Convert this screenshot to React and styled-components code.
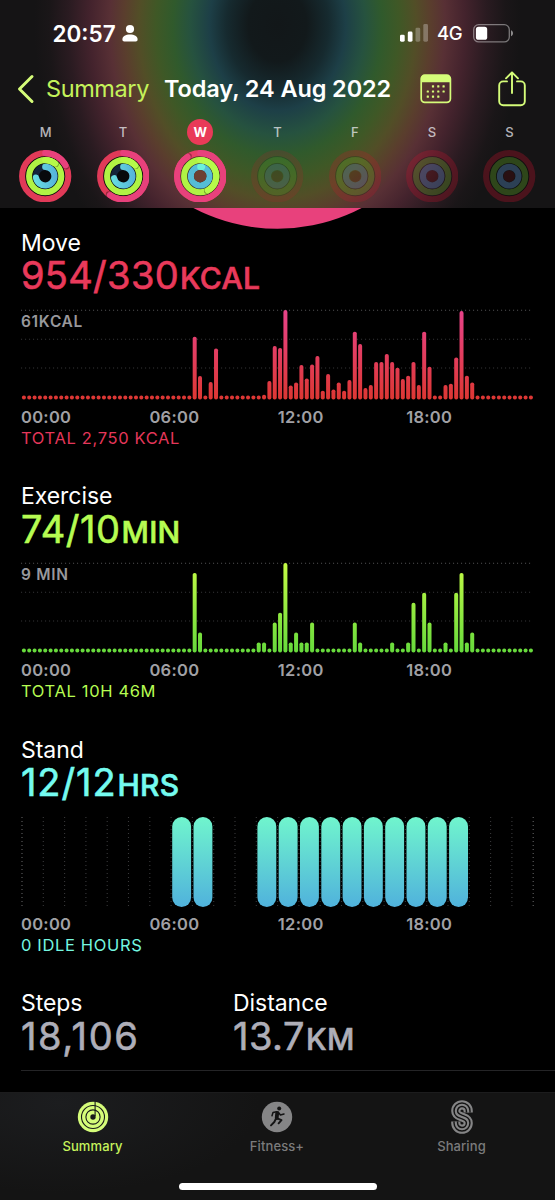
import React from 'react'
import styled, { createGlobalStyle } from 'styled-components';

const BARS = 96
const STEP = 5.337

// quarter-hour bars as index: height, everything else is an empty dot
const MOVE = {
  32: 62.7, 33: 23.3, 35: 17.3, 36: 51, 45: 4.7, 46: 18.3, 47: 53.3, 48: 51.5,
  49: 89.3, 50: 14, 51: 17, 52: 34.3, 53: 21, 54: 35, 55: 43.3, 56: 8.7,
  57: 25.3, 58: 10, 59: 17, 60: 8.7, 61: 19.3, 62: 67.7, 63: 55.3, 64: 11.3,
  65: 14.3, 66: 37.3, 67: 37.5, 68: 45.5, 69: 37.3, 70: 31.7, 71: 20.3,
  72: 23.7, 73: 37.5, 74: 14.3, 75: 67.7, 76: 32.7, 79: 14.3, 80: 15.7,
  81: 42, 82: 88.3, 83: 23.7, 84: 17,
}

// minutes of exercise
const EXERCISE = {
  32: 8, 33: 2, 44: 1, 45: 1, 47: 3, 48: 4, 49: 9, 50: 1, 51: 2, 52: 1, 53: 1,
  54: 3, 62: 3, 63: 1, 69: 1, 72: 1, 73: 5, 75: 6, 76: 3, 79: 1, 81: 6, 82: 8,
  83: 1, 84: 2,
}

const STAND = [7, 8, 11, 12, 13, 14, 15, 16, 17, 18, 19, 20]

const DAYS = [
  { letter: 'M', move: 62, exercise: 38, stand: 262 },
  { letter: 'T', move: 215, exercise: 48, stand: 258 },
  { letter: 'W', move: 327, exercise: 152, stand: 360, today: true },
  { letter: 'T', fade: 0.55 },
  { letter: 'F', fade: 0.75 },
  { letter: 'S', fade: 0.9 },
  { letter: 'S', fade: 1 },
]

const point = (r, deg) => {
  const a = (deg - 90) * Math.PI / 180
  return [26.2 + r * Math.cos(a), 26.2 + r * Math.sin(a)]
}

const arc = (r, deg) => {
  const [x, y] = point(r, deg)
  return `M26.2 ${26.2 - r}A${r} ${r} 0 ${deg > 180 ? 1 : 0} 1 ${x} ${y}`
}

// a closed ring with the end of its second lap on top
const Lap = ({ r, deg, base, top }) => {
  const [x, y] = point(r, deg + 4)
  return (
    <>
      <circle cx="26.2" cy="26.2" r={r} stroke={base} />
      <circle cx={x} cy={y} r="2.8" fill="rgba(0,0,0,.32)" stroke="none" />
      <path d={arc(r, deg)} stroke={top} strokeLinecap="round" />
    </>
  )
}

const Rings = ({ day }) => {
  if (!day.move) {
    return (
      <RingSvg viewBox="0 0 52.4 52.4" opacity={day.fade}>
        <circle cx="26.2" cy="26.2" r="23.1" stroke="rgba(215,17,45,.28)" />
        <circle cx="26.2" cy="26.2" r="19.6" stroke="rgba(0,0,0,.22)" strokeWidth="1" />
        <circle cx="26.2" cy="26.2" r="16.1" stroke="rgba(110,200,40,.28)" />
        <circle cx="26.2" cy="26.2" r="12.8" stroke="rgba(0,0,0,.3)" strokeWidth="1" />
        <circle cx="26.2" cy="26.2" r="9.3" stroke="rgba(90,150,210,.34)" />
        <circle cx="26.2" cy="26.2" r="5.6" fill="rgba(90,10,10,.3)" stroke="none" />
      </RingSvg>
    )
  }
  const blue = `blue-${day.letter}`
  return (
    <RingSvg viewBox="0 0 52.4 52.4">
      <defs>
        <linearGradient id={blue} gradientUnits="userSpaceOnUse" x1="14" y1="0" x2="38" y2="0">
          <stop offset="0" stopColor="#68e0e2" />
          <stop offset="1" stopColor="#55b2da" />
        </linearGradient>
      </defs>
      <circle cx="26.2" cy="26.2" r="21" fill={day.today ? '#453329' : '#08090c'} stroke="none" />
      <Lap r={23.1} deg={day.move} base={day.today ? '#e83e68' : '#e13a58'} top="#e8417c" />
      <Lap r={16.1} deg={day.exercise} base="#b0f344" top="#b6fa4a" />
      <circle cx="26.2" cy="26.2" r="9.3" stroke="#14243a" />
      {day.stand === 360
        ? <>
            <circle cx="26.2" cy="26.2" r="9.3" stroke="#55bdd6" />
            <path d={arc(9.3, 12)} stroke="#6cf0d8" strokeLinecap="round" />
            <circle cx="26.2" cy="26.2" r="6.2" fill="#6d4032" stroke="none" />
          </>
        : <path d={arc(9.3, day.stand)} stroke={`url(#${blue})`} strokeLinecap="round" />
      }
    </RingSvg>
  )
}

const BarChart = ({ id, data, scale, from, to }) => (
  <ChartSvg viewBox="0 0 534 94">
    <defs>
      <linearGradient id={id} gradientUnits="userSpaceOnUse" x1="0" y1="2" x2="0" y2="91.3">
        <stop offset="0" stopColor={from} />
        <stop offset="1" stopColor={to} />
      </linearGradient>
    </defs>
    {[2.2, 31.2, 60].map((y, i) => (
      <line key={y} x1="0" x2="512" y1={y} y2={y} stroke={i === 0 ? '#505052' : '#353537'} strokeWidth="1.1" strokeDasharray="1.1 2.9" />
    ))}
    {Array.from({ length: BARS }, (_, i) => {
      const h = Math.max((data[i] || 0) * scale, 4)
      return <rect key={i} x={0.9 + i * STEP} y={91.4 - h} width="4" height={h} rx="1.9" fill={`url(#${id})`} />
    })}
  </ChartSvg>
)

const StandChart = () => (
  <ChartSvg viewBox="0 0 534 94">
    <defs>
      <linearGradient id="stand" gradientUnits="userSpaceOnUse" x1="0" y1="2" x2="0" y2="92">
        <stop offset="0" stopColor="#70f5cd" />
        <stop offset="1" stopColor="#50b2dc" />
      </linearGradient>
    </defs>
    {Array.from({ length: 25 }, (_, i) => (
      <line key={i} x1={1 + i * 21.3} x2={1 + i * 21.3} y1="2" y2="91" stroke={i % 24 === 0 ? '#606062' : '#38383a'} strokeWidth="1.1" strokeDasharray="1.1 2.9" />
    ))}
    {STAND.map((hour) => (
      <rect key={hour} x={2.1 + hour * 21.3} y="2" width="18.9" height="90" rx="9.45" fill="url(#stand)" />
    ))}
  </ChartSvg>
)

const Hours = () => (
  <Axis>
    <span>00:00</span>
    <span>06:00</span>
    <span>12:00</span>
    <span>18:00</span>
  </Axis>
)

const Header = () => (
  <Top>
    <StatusBar>
      <Clock>20:57</Clock>
      <PersonIcon viewBox="0 0 16 18">
        <circle cx="8" cy="5" r="4.1" />
        <path d="M.4 15.6C.4 12.4 3.6 10.6 8 10.6s7.6 1.8 7.6 5c0 1.2-.7 1.9-1.9 1.9H2.3C1.1 17.5.4 16.8.4 15.6z" />
      </PersonIcon>
      <Signal viewBox="0 0 29 18">
        <rect x="0" y="10.7" width="4.7" height="7" rx="1.4" />
        <rect x="7.8" y="7.6" width="4.7" height="10.1" rx="1.4" />
        <rect x="15.5" y="3.7" width="4.7" height="14" rx="1.4" opacity=".28" />
        <rect x="23.3" y="0" width="4.7" height="17.7" rx="1.4" opacity=".28" />
      </Signal>
      <Network>4G</Network>
      <Battery viewBox="0 0 41 19">
        <rect x=".7" y=".7" width="35.6" height="17.2" rx="5" fill="none" stroke="#fff" strokeOpacity=".42" strokeWidth="1.3" />
        <rect x="2.9" y="2.8" width="11.3" height="13" rx="2.6" fill="#fff" />
        <path d="M38 6.3c2.7 1 2.7 5 0 6z" fill="#fff" fillOpacity=".5" />
      </Battery>
    </StatusBar>

    <NavRow>
      <BackIcon viewBox="0 0 18 30">
        <path d="M15 2.5 2.5 15 15 27.5" />
      </BackIcon>
      <BackLabel>Summary</BackLabel>
      <Title>Today, 24 Aug 2022</Title>
      <CalendarIcon viewBox="0 0 32 30">
        <rect x="1.2" y="1.2" width="29.2" height="27.2" rx="3.6" fill="none" stroke="#d5fc79" strokeWidth="1.7" />
        <path d="M1 8.3V4.5Q1 1 4.5 1h22.6q3.5 0 3.5 3.5v3.8z" fill="#d5fc79" />
        {[[13, 12.3], [18.3, 12.3], [23.6, 12.3], [7.8, 17.5], [13, 17.5], [18.3, 17.5], [23.6, 17.5], [7.8, 22.7], [13, 22.7], [18.3, 22.7]].map(([x, y]) => (
          <rect key={`${x}-${y}`} x={x - 1.1} y={y - 1.1} width="2.2" height="2.2" rx=".5" fill="#d5fc79" />
        ))}
      </CalendarIcon>
      <ShareIcon viewBox="0 0 28 36">
        <path d="M9 10.4H5.2a4 4 0 0 0-4 4v15.9a4 4 0 0 0 4 4h17.600a4 4 0 0 0 4-4V14.4a4 4 0 0 0-4-4H19" />
        <path d="M14 22V1.5M8 7.3l6-6 6 6" />
      </ShareIcon>
    </NavRow>

    <Week>
      {DAYS.map((day, i) => (
        <Day key={i}>
          <Letter $today={day.today}>{day.letter}</Letter>
          <Rings day={day} />
        </Day>
      ))}
    </Week>
  </Top>
)

const TabBar = () => (
  <Tabs>
    <TabRow>
      <Tab $active>
        <TabIcon viewBox="-17 -17 34 34">
          <circle r="15.2" fill="#d5fc79" />
          <g fill="none" stroke="#18191a" strokeWidth="1.1">
            <circle r="11.5" />
            <circle r="7.1" />
            <path d="M2.1-15.5V-1" />
          </g>
          <circle r="2.7" fill="#18191a" />
        </TabIcon>
        Summary
      </Tab>
      <Tab>
        <TabIcon viewBox="-17 -17 34 34">
          <circle r="15.2" fill="#858586" />
          <circle cx="2.2" cy="-8.4" r="2" fill="#141414" />
          <g fill="none" stroke="#141414" strokeLinecap="round" strokeLinejoin="round">
            <path d="M.2-4-.3 1" strokeWidth="3.8" />
            <path d="M-.5-5.2-4-4.4-5-1.3M1.5-4.6 3.4-2 7-3" strokeWidth="1.5" />
            <path d="M.3 1.3 4.5 3.2 1.6 6.3M-1 1.5-2.7 5-6 8.4" strokeWidth="1.9" />
          </g>
        </TabIcon>
        Fitness+
      </Tab>
      <Tab>
        <TabIcon viewBox="-17 -17 34 34">
          <g fill="none">
            {[['#858586', 9.2], ['#141414', 5], ['#858586', 2.1]].map(([color, width]) => (
              <path key={width} d="M6.2-4.4V-6A6.2 6.2 0 0 0-6.2-6C-6.2-2-3.2-1.2 0 0S6.2 2 6.2 6A6.2 6.2 0 0 1-6.2 6V4.4" stroke={color} strokeWidth={width} />
            ))}
          </g>
        </TabIcon>
        Sharing
      </Tab>
    </TabRow>
    <HomeIndicator />
  </Tabs>
)

const App = () => {
  return (
    <Screen>
      <GlobalStyle />
      <Header />
      <Main>
        <RingEdge viewBox="0 0 555 21">
          <circle cx="277.5" cy="-159.7" r="180.5" fill="#e8417c" />
        </RingEdge>

        <Section>
          <Name>Move</Name>
          <Value $color="#e93a5b" $track="0.3px">954/330<Unit>KCAL</Unit></Value>
          <ChartBox>
            <BarChart id="move" data={MOVE} scale={1} from="#e8438a" to="#dd3733" />
            <Peak>61KCAL</Peak>
          </ChartBox>
          <Hours />
          <Total $color="#e5375a">TOTAL 2,750 KCAL</Total>
        </Section>

        <Section>
          <Name>Exercise</Name>
          <Value $color="#b6fc52" $track="0.5px">74/10<Unit>MIN</Unit></Value>
          <ChartBox>
            <BarChart id="exercise" data={EXERCISE} scale={9.93} from="#c4fb45" to="#66da3c" />
            <Peak>9 MIN</Peak>
          </ChartBox>
          <Hours />
          <Total $color="#b6fc52">TOTAL 10H 46M</Total>
        </Section>

        <Section>
          <Name>Stand</Name>
          <Value $color="#74fbf0" $track="0.9px">12/12<Unit>HRS</Unit></Value>
          <ChartBox>
            <StandChart />
          </ChartBox>
          <Hours />
          <Total $color="#74f7e0">0 IDLE HOURS</Total>
        </Section>

        <Stats>
          <Stat>
            <Name>Steps</Name>
            <Value $color="#aeaeb8" $track="1.6px">18,106</Value>
          </Stat>
          <Stat>
            <Name>Distance</Name>
            <Value $color="#aeaeb8" $track="0.5px">13.7<Unit>KM</Unit></Value>
          </Stat>
        </Stats>
      </Main>
      <TabBar />
    </Screen>
  )
}

const GlobalStyle = createGlobalStyle`
* {
  box-sizing: border-box;
}
body {
  margin: 0;
  background-color: #000;
  font-family: Inter, "Liberation Sans", sans-serif;
}
svg {
  display: block;
  flex-shrink: 0;
}
`

const Screen = styled.div`
display: flex;
flex-direction: column;
width: 555px;
height: 1200px;
overflow: hidden;
background-color: #000;
color: #fff;
`

const Top = styled.header`
height: 208px;
flex-shrink: 0;
background: radial-gradient(ellipse 243px 305px at 277.5px 25px,
  #121719 0%, #12191b 12%, #162a2f 21%, #1d3f47 28%, #26523f 36%,
  #305a2c 43%, #3f5826 50%, #524e27 57%, #5a3e2d 63%, #583035 69%,
  #44232d 77%, #2a1b21 86%, #1a1618 94%, #151415 100%);
`

const StatusBar = styled.div`
display: flex;
align-items: center;
height: 66px;
padding-left: 52.5px;
`

const Clock = styled.span`
width: 69.5px;
font-size: 22.5px;
font-weight: 600;
letter-spacing: 0;
`

const PersonIcon = styled.svg`
width: 16px;
height: 18px;
margin-right: 262px;
fill: #fff;
`

const Signal = styled.svg`
width: 29px;
height: 18px;
fill: #fff;
`

const Network = styled.span`
width: 36px;
margin-left: 8px;
font-size: 18.5px;
font-weight: 500;
letter-spacing: -0.3px;
`

const Battery = styled.svg`
width: 41px;
height: 19px;
`

const NavRow = styled.nav`
display: flex;
align-items: center;
height: 45px;
padding-left: 17px;
`

const BackIcon = styled.svg`
width: 18px;
height: 30px;
fill: none;
stroke: #d5fc79;
stroke-width: 3;
stroke-linecap: round;
stroke-linejoin: round;
`

const BackLabel = styled.span`
width: 119px;
padding-left: 11px;
font-size: 23.5px;
letter-spacing: -0.4px;
color: #c4f25a;
`

const Title = styled.span`
width: 265.5px;
padding-left: 10px;
white-space: nowrap;
font-size: 23.5px;
font-weight: 600;
letter-spacing: -0.1px;
`

const CalendarIcon = styled.svg`
width: 32px;
height: 30px;
margin-right: 46px;
`

const ShareIcon = styled.svg`
width: 28px;
height: 36px;
fill: none;
stroke: #d5fc79;
stroke-width: 1.9;
stroke-linecap: round;
stroke-linejoin: round;
`

const Week = styled.div`
display: grid;
grid-template-columns: repeat(7, 1fr);
padding: 8px 7px 0;
`

const Day = styled.div`
display: flex;
flex-direction: column;
align-items: center;
gap: 5px;
`

const Letter = styled.span`
width: 26px;
height: 26px;
border-radius: 50%;
text-align: center;
line-height: 26px;
font-size: 13px;
font-weight: ${p => p.$today ? 700 : 500};
color: ${p => p.$today ? '#fff' : 'rgba(235,235,240,.75)'};
background-color: ${p => p.$today ? '#e93a58' : 'transparent'};
`

const RingSvg = styled.svg`
width: 52.4px;
height: 52.4px;
fill: none;
stroke-width: 6.1;
`

const Main = styled.main`
height: 884px;
flex-shrink: 0;
`

const RingEdge = styled.svg`
width: 555px;
height: 21px;
`

const Section = styled.section`
height: 253.4px;
padding-left: 21px;
`

const Name = styled.div`
line-height: 28.4px;
font-size: 23px;
letter-spacing: -0.05px;
`

const Value = styled.div`
height: 34px;
margin-top: 1px;
line-height: 34px;
white-space: nowrap;
font-size: 38px;
letter-spacing: ${p => p.$track};
color: ${p => p.$color};
-webkit-text-stroke: 0.6px ${p => p.$color};
`

const Unit = styled.span`
margin-left: 1px;
font-size: 30px;
font-weight: 500;
letter-spacing: 0.3px;
`

const ChartBox = styled.div`
position: relative;
margin-top: 15.6px;
`

const ChartSvg = styled.svg`
width: 534px;
height: 94px;
`

const Peak = styled.span`
position: absolute;
top: 5px;
left: 0;
line-height: 18px;
font-size: 15.5px;
font-weight: 600;
letter-spacing: 0.7px;
color: #98989c;
`

const Axis = styled.div`
display: grid;
grid-template-columns: repeat(4, 128.4px);
margin-top: 6px;
line-height: 18px;
font-size: 16.5px;
font-weight: 600;
letter-spacing: 0.3px;
color: #a0a0a5;
`

const Total = styled.div`
margin-top: 2px;
line-height: 20px;
font-size: 16.5px;
letter-spacing: 0.65px;
color: ${p => p.$color};
`

const Stats = styled.div`
display: flex;
height: 81.8px;
margin-left: 21px;
border-bottom: 1px solid #242426;
`

const Stat = styled.div`
width: 212px;
`

const Tabs = styled.footer`
display: flex;
flex-direction: column;
align-items: center;
height: 108px;
border-top: 1px solid #1c1c1d;
background: radial-gradient(ellipse 200px 90px at 60px 10px, #1c1d1f 0%, #141414 100%);
`

const TabRow = styled.div`
display: grid;
grid-template-columns: repeat(3, 184.5px);
height: 90px;
margin-right: 1px;
padding-top: 7px;
`

const Tab = styled.div`
display: flex;
flex-direction: column;
align-items: center;
gap: 3px;
line-height: 18px;
font-size: 13px;
font-weight: 500;
letter-spacing: 0.1px;
color: ${p => p.$active ? '#c6f35c' : '#7b7b7c'};
`

const TabIcon = styled.svg`
width: 34px;
height: 34px;
`

const HomeIndicator = styled.div`
width: 198px;
height: 7px;
border-radius: 4px;
background-color: #fff;
`

export default App;
